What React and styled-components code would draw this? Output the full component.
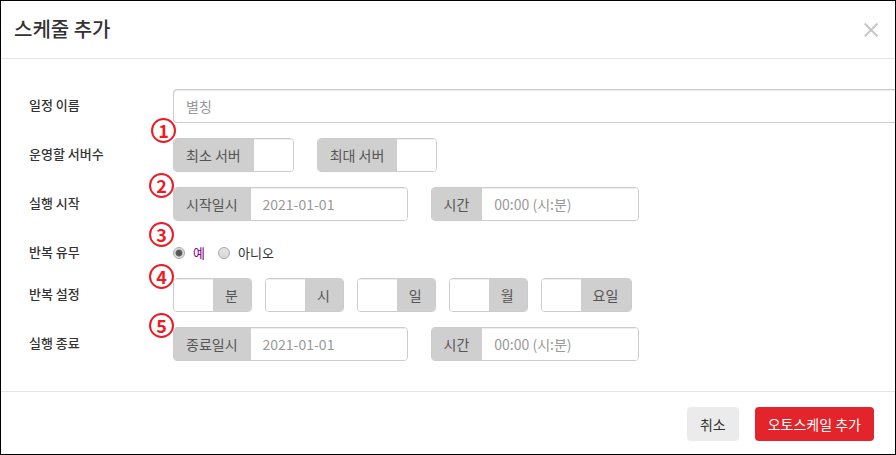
import React, { useState } from 'react';
import styled, { createGlobalStyle } from 'styled-components';

const GlobalStyle = createGlobalStyle`
  *,
  *::before,
  *::after {
    box-sizing: border-box;
  }

  body {
    margin: 0;
    background: #fff;
    color: #333;
    font-family: 'Noto Sans CJK KR', 'Noto Sans', sans-serif;
    font-size: 14px;
    line-height: 20px;
  }

  input,
  button {
    font: inherit;
  }
`;

const Dialog = styled.form`
  border: 1px solid #000;
  background: #fff;
  overflow: hidden;
`;

const Header = styled.header`
  display: flex;
  align-items: center;
  justify-content: space-between;
  padding: 14px 16px 15px 13px;
  border-bottom: 1px solid #e5e5e5;
`;

const Title = styled.h4`
  margin: 0;
  font-size: 20px;
  font-weight: 500;
  line-height: 28px;
`;

const CloseButton = styled.button`
  display: flex;
  padding: 0;
  border: 0;
  background: none;
  color: #c4c4c4;
  cursor: pointer;
`;

const Body = styled.div`
  display: flex;
  flex-direction: column;
  gap: 15px;
  padding: 30px 0 30px 28px;
`;

const Row = styled.div`
  display: flex;
  align-items: flex-start;
`;

const RowLabel = styled.label`
  flex: 0 0 144px;
  padding-top: 6px;
  font-size: 13px;
  font-weight: 500;
`;

const RowContent = styled.div`
  position: relative;
  display: flex;
  flex: 1;
  gap: ${props => props.$gap || 23}px;
`;

const Step = styled.span`
  position: absolute;
  top: ${props => (props.$raised ? -20 : -14)}px;
  left: ${props => (props.$raised ? -22 : -24)}px;
  display: flex;
  align-items: center;
  justify-content: center;
  width: 25px;
  height: 25px;
  padding-bottom: 2px;
  border: 2px solid #ed1c24;
  border-radius: 50%;
  color: #ed1c24;
  font-size: 18px;
  font-weight: 700;
  line-height: 20px;
`;

const NameInput = styled.input`
  flex: 1;
  min-width: 0;
  height: 34px;
  padding: 6px 12px;
  border: 1px solid #ccc;
  border-right: 0;
  border-radius: 4px 0 0 4px;
  box-shadow: inset 0 1px 1px rgba(0, 0, 0, 0.075);
  color: #555;
  outline: none;

  &::placeholder {
    color: #999;
  }
`;

const Group = styled.div`
  display: flex;
  height: 34px;
  border: 1px solid #ccc;
  border-radius: 4px;
  overflow: hidden;
`;

const Addon = styled.label`
  padding: 6px 13px 6px 12px;
  background: #cfcfcf;
  color: #555;
  white-space: nowrap;
`;

const GroupInput = styled.input`
  width: ${props => (props.$wide ? 156 : 39)}px;
  padding: 6px 12px;
  border: 0;
  background: #fff;
  box-shadow: inset 0 1px 1px rgba(0, 0, 0, 0.075);
  color: #555;
  outline: none;

  &::placeholder {
    color: #999;
  }
`;

const Choice = styled.label`
  display: flex;
  align-items: center;
  gap: 8px;
  height: 27px;
  padding-top: 6px;
  color: ${props => (props.$active ? '#800080' : '#333')};
  font-size: 13px;
`;

const Radio = styled.input`
  appearance: none;
  width: 12px;
  height: 12px;
  margin: 0;
  border: 1px solid #a8a8a8;
  border-radius: 50%;
  background: linear-gradient(#e4e4e4, #d8d8d8);

  &:checked {
    background: radial-gradient(circle, #555 0 2px, #666 3px, #e0e0e0 4px);
  }
`;

const Footer = styled.footer`
  display: flex;
  justify-content: flex-end;
  gap: 16px;
  padding: 15px 21px 13px;
  border-top: 1px solid #e5e5e5;
`;

const Button = styled.button`
  height: 34px;
  padding: 6px 13px;
  border: 0;
  border-radius: 4px;
  background: ${props => (props.$primary ? '#e3242b' : '#ebebeb')};
  color: ${props => (props.$primary ? '#fff' : '#333')};
  line-height: 20px;
  cursor: pointer;
`;

const REPEAT_UNITS = [
  { id: 'minute', label: '분' },
  { id: 'hour', label: '시' },
  { id: 'day', label: '일' },
  { id: 'month', label: '월' },
  { id: 'weekday', label: '요일' }
];

function AddonInput({ id, label, placeholder, wide, addonAfter }) {
  const addon = <Addon htmlFor={id}>{label}</Addon>;
  return (
    <Group>
      {!addonAfter && addon}
      <GroupInput id={id} type="text" placeholder={placeholder} $wide={wide} />
      {addonAfter && addon}
    </Group>
  );
}

function DateTimeRow({ id, label, dateLabel, step }) {
  return (
    <Row>
      <RowLabel htmlFor={id + '-date'}>{label}</RowLabel>
      <RowContent>
        <AddonInput id={id + '-date'} label={dateLabel} placeholder="2021-01-01" wide />
        <AddonInput id={id + '-time'} label="시간" placeholder="00:00 (시:분)" wide />
        <Step>{step}</Step>
      </RowContent>
    </Row>
  );
}

function App() {
  const [repeat, setRepeat] = useState('yes');

  return (
    <>
      <GlobalStyle />
      <Dialog onSubmit={e => e.preventDefault()}>
        <Header>
          <Title>스케줄 추가</Title>
          <CloseButton type="button" aria-label="닫기">
            <svg width="16" height="16" viewBox="0 0 16 16" fill="none" stroke="currentColor" strokeWidth="1.9">
              <path d="M1.7 2.5l12.8 12.8M14.5 2.5L1.7 15.3" />
            </svg>
          </CloseButton>
        </Header>
        <Body>
          <Row>
            <RowLabel htmlFor="name">일정 이름</RowLabel>
            <RowContent>
              <NameInput id="name" type="text" placeholder="별칭" />
            </RowContent>
          </Row>
          <Row>
            <RowLabel htmlFor="min-server">운영할 서버수</RowLabel>
            <RowContent>
              <AddonInput id="min-server" label="최소 서버" />
              <AddonInput id="max-server" label="최대 서버" />
              <Step $raised>1</Step>
            </RowContent>
          </Row>
          <DateTimeRow id="start" label="실행 시작" dateLabel="시작일시" step={2} />
          <Row>
            <RowLabel as="span" id="repeat-label">반복 유무</RowLabel>
            <RowContent $gap={13} role="radiogroup" aria-labelledby="repeat-label">
              <Choice $active={repeat === 'yes'}>
                <Radio type="radio" name="repeat" checked={repeat === 'yes'} onChange={() => setRepeat('yes')} />
                예
              </Choice>
              <Choice $active={repeat === 'no'}>
                <Radio type="radio" name="repeat" checked={repeat === 'no'} onChange={() => setRepeat('no')} />
                아니오
              </Choice>
              <Step>3</Step>
            </RowContent>
          </Row>
          <Row>
            <RowLabel htmlFor="minute">반복 설정</RowLabel>
            <RowContent $gap={13}>
              {REPEAT_UNITS.map(unit => (
                <AddonInput key={unit.id} id={unit.id} label={unit.label} addonAfter />
              ))}
              <Step>4</Step>
            </RowContent>
          </Row>
          <DateTimeRow id="end" label="실행 종료" dateLabel="종료일시" step={5} />
        </Body>
        <Footer>
          <Button type="button">취소</Button>
          <Button type="submit" $primary>오토스케일 추가</Button>
        </Footer>
      </Dialog>
    </>
  );
}

export default App;
